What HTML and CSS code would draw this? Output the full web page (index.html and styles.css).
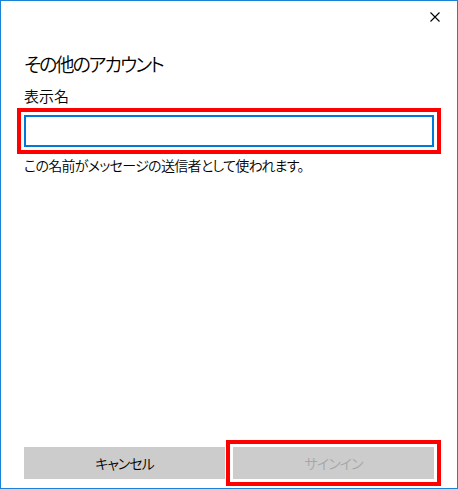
FILE: index.html
```html
<!DOCTYPE html>
<html lang="ja">
<head>
    <meta charset="UTF-8">
    <meta name="viewport" content="width=device-width, initial-scale=1.0">
    <title>その他のアカウント</title>
    <link rel="stylesheet" href="styles.css">
</head>
<body>
    <div class="window">
        <div class="titlebar">
            <button class="close-btn" aria-label="閉じる">
                <svg width="10" height="10" viewBox="0 0 10 10">
                    <path d="M0.5 0.5 L9.5 9.5 M9.5 0.5 L0.5 9.5" stroke="#000" stroke-width="1.1" fill="none"/>
                </svg>
            </button>
        </div>

        <div class="content">
            <h1 class="title">その他のアカウント</h1>
            <label class="field-label" for="display-name">表示名</label>
            <div class="mark">
                <input type="text" id="display-name" class="text-input">
            </div>
            <p class="hint">この名前がメッセージの送信者として使われます。</p>
        </div>

        <div class="footer">
            <button class="btn">キャンセル</button>
            <div class="mark">
                <button class="btn" disabled>サインイン</button>
            </div>
        </div>
    </div>
</body>
</html>
```

FILE: styles.css
```css
html, body {
    margin: 0;
    padding: 0;
    height: 100%;
    background: #fff;
}

body {
    font-family: "Noto Sans CJK JP", "Noto Sans", sans-serif;
    font-feature-settings: "palt";
    color: #000;
}

.window {
    box-sizing: border-box;
    height: 100vh;
    border: 1px solid #1883d7;
    display: flex;
    flex-direction: column;
}

.titlebar {
    height: 32px;
    display: flex;
    justify-content: flex-end;
    align-items: flex-start;
}

.close-btn {
    background: none;
    border: none;
    padding: 0;
    margin: 11px 17px 0 0;
    width: 10px;
    height: 10px;
    line-height: 0;
    cursor: pointer;
}

.content {
    flex: 1;
    padding: 0 23px;
    display: flex;
    flex-direction: column;
}

.title {
    margin: 17px 0 0;
    font-size: 19px;
    font-weight: 350;
    letter-spacing: -2px;
    line-height: 28px;
}

.field-label {
    margin-top: 8px;
    font-size: 15px;
    font-weight: 350;
    line-height: 20px;
}

.mark {
    position: relative;
}

/* red annotation frame */
.mark::after {
    content: "";
    position: absolute;
    top: -7px;
    left: -7px;
    right: -7px;
    bottom: -7px;
    border: 4px solid #f00;
    pointer-events: none;
}

.content .mark {
    margin-top: 9px;
}

.text-input {
    box-sizing: border-box;
    display: block;
    width: 100%;
    height: 32px;
    border: 2px solid #0078d7;
    padding: 0 8px;
    font-family: inherit;
    font-size: 15px;
    outline: none;
}

.hint {
    margin: 8px 0 0;
    font-size: 14px;
    font-weight: 350;
    letter-spacing: -0.7px;
    line-height: 20px;
}

.footer {
    display: grid;
    grid-template-columns: 1fr 1fr;
    gap: 8px;
    padding: 0 23px 9px;
}

.btn {
    display: block;
    width: 100%;
    height: 32px;
    border: none;
    background: #cccccc;
    color: #000;
    font-family: inherit;
    font-feature-settings: "palt";
    font-size: 14px;
    font-weight: 350;
    letter-spacing: -1px;
    padding: 0;
    cursor: pointer;
}

.btn:disabled {
    color: #a6a6a6;
    cursor: default;
}
```
